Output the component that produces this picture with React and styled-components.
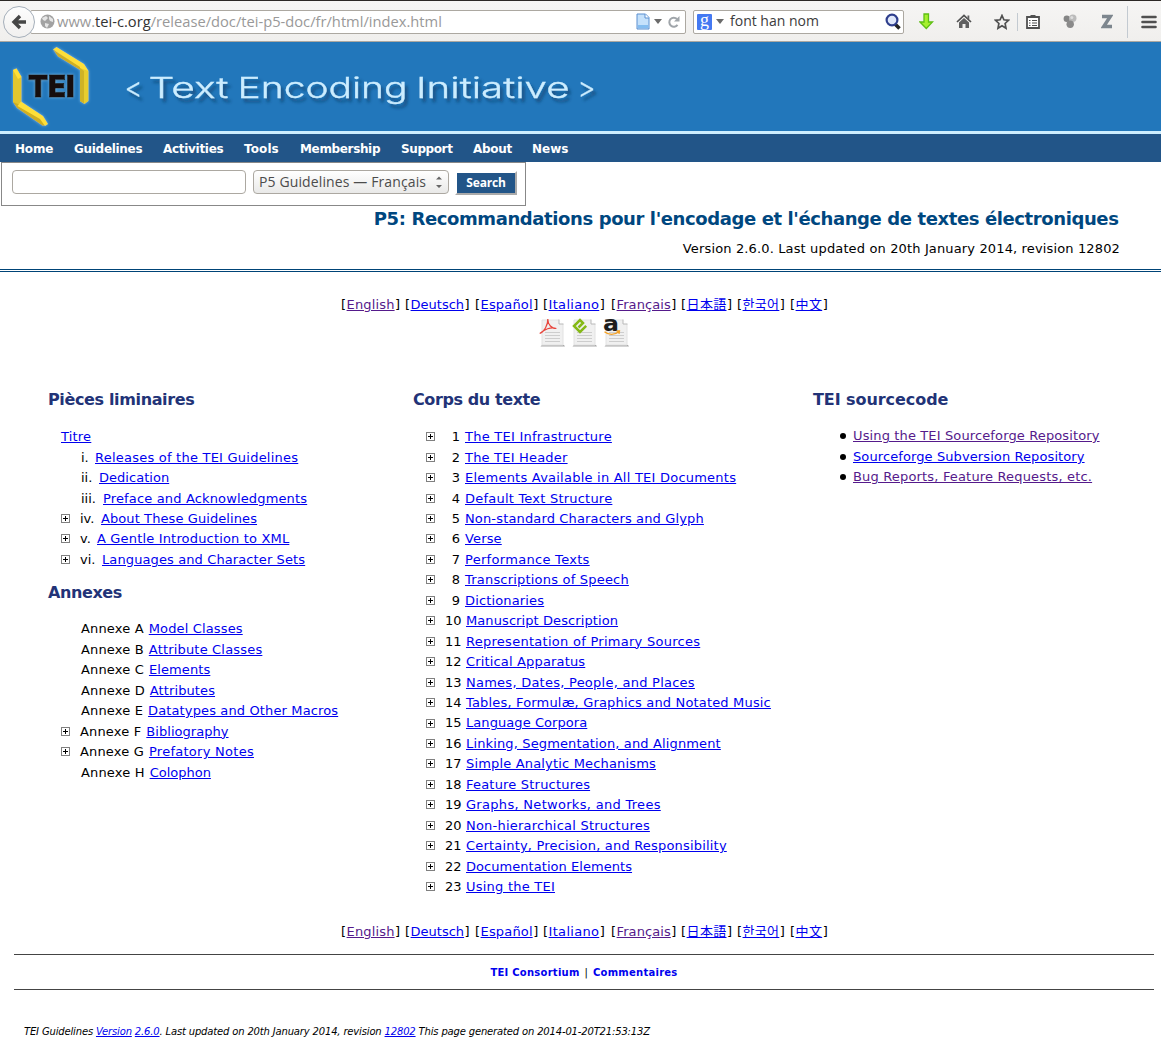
import React from "react";
import styled, { createGlobalStyle } from "styled-components";

const Global = createGlobalStyle`
  * { box-sizing: border-box; }
  body {
    margin: 0;
    background: #fff;
    color: #000;
    font: 13px/20.46px "DejaVu Sans", "Noto Sans CJK JP", "Noto Sans CJK KR", sans-serif;
  }
`;

const Page = styled.div`
  width: 1161px;
  height: 1058px;
  overflow: hidden;
`;

/* Browser toolbar */
const Toolbar = styled.div`
  display: flex;
  align-items: center;
  height: 42px;
  padding-top: 1px;
  border-top: 1px solid #2c2825;
  border-bottom: 1px solid #aca8a1;
  background: linear-gradient(#f6f5f4, #f0efed);
  font-family: "Open Sans", sans-serif;
`;
const BackButton = styled.div`
  flex: none;
  display: flex;
  align-items: center;
  justify-content: center;
  width: 32px;
  height: 32px;
  margin-left: 3px;
  border: 1px solid #a5afba;
  border-radius: 50%;
  background: linear-gradient(#fdfdfd, #f1f0ef);
  z-index: 1;
`;
const Field = styled.div`
  display: flex;
  flex: none;
  align-items: center;
  height: 24px;
  border: 1px solid #aca8a1;
  border-radius: 2px;
  background: #fff;
`;
const UrlField = styled(Field)`
  width: 656px;
  margin-left: -5px;
  padding: 0 5px 0 9px;
`;
const SearchField = styled(Field)`
  width: 211px;
  margin-left: 7px;
  padding: 0 2px 0 3px;
`;
const Url = styled.span`
  flex: 1;
  margin-left: 2px;
  color: #999;
  font-size: 14.7px;
  white-space: nowrap;
  b { color: #333; font-weight: 400; }
`;
const Query = styled.span`
  flex: 1;
  margin-left: 6px;
  color: #3c3c3c;
  font-size: 14px;
  white-space: nowrap;
`;
const GBadge = styled.span`
  display: flex;
  justify-content: center;
  width: 15px;
  height: 16px;
  border-radius: 1px;
  background: #4479f2;
  color: #fff;
  font: 18px/12px "Liberation Serif", serif;
`;
const Caret = styled.span`
  margin: 0 ${(p) => p.$right || 0}px 0 4px;
  border: 4px solid transparent;
  border-top: 5px solid #6b6b6b;
  border-bottom: 0;
`;
const Tool = styled.span`
  display: flex;
  flex: none;
  justify-content: center;
  width: 20px;
  margin-left: ${(p) => p.$gap}px;
`;
const Divider = styled.span`
  flex: none;
  width: 1px;
  height: ${(p) => p.$h}px;
  margin-left: ${(p) => p.$gap}px;
  background: #c3cad1;
`;

/* Site banner */
const Banner = styled.header`
  display: flex;
  height: 92px;
  border-bottom: 3px solid #cdeeff;
  background: #2277bb;
`;
const Nav = styled.nav`
  display: flex;
  align-items: center;
  gap: 21px;
  height: 28px;
  padding: 2px 0 0 15px;
  background: #225588;
  color: #fff;
  font-size: 12px;
  font-weight: 700;
`;
const NavItem = styled.span`
  width: ${(p) => p.$w}px;
  letter-spacing: ${(p) => p.$track || 0}px;
  white-space: nowrap;
`;

/* Search form */
const SearchForm = styled.div`
  display: flex;
  align-items: flex-start;
  width: 525px;
  height: 44px;
  margin-left: 1px;
  padding: 7px 0 0 10px;
  border: 1px solid #888;
`;
const Control = styled.div`
  height: 24px;
  border: 1px solid #aca8a1;
  border-radius: 4px;
`;
const TextBox = styled(Control)`
  width: 234px;
`;
const Picker = styled(Control)`
  display: flex;
  align-items: center;
  justify-content: space-between;
  width: 196px;
  margin-left: 7px;
  padding: 0 5px 2px 5px;
  background: linear-gradient(#fff, #e9e9e8);
  color: #4c4c4c;
  font: 14px "Open Sans", sans-serif;
  letter-spacing: 0.12px;
  white-space: nowrap;
`;
const Submit = styled.div`
  width: 62px;
  height: 24px;
  margin: 1px 0 0 6px;
  border: 2px solid #aaa;
  border-top-color: #fff;
  border-left-color: #fff;
  background: #225588;
  background-clip: padding-box;
  color: #fff;
  font: 700 12px/20px "Open Sans", sans-serif;
  letter-spacing: -0.2px;
  text-align: center;
`;

/* Document heading */
const TitleBlock = styled.div`
  height: 66px;
  padding-right: 41px;
  border-bottom: 3px double #004477;
  text-align: right;
`;
const Title = styled.h1`
  margin: 0;
  padding-right: 1.5px;
  color: #00477f;
  font-size: 18px;
  line-height: 25px;
  letter-spacing: -0.395px;
`;
const Version = styled.div`
  margin-top: 8px;
  letter-spacing: 0.14px;
`;

const Link = styled.a`
  color: ${(p) => (p.$visited ? "#551a8b" : "#0000ee")};
  text-decoration: underline;
  letter-spacing: ${(p) => p.$track || 0}px;
`;

const Languages = styled.div`
  display: flex;
  justify-content: center;
  padding-left: 8px;
  margin-top: ${(p) => p.$top}px;
`;
const LangItem = styled.span`
  flex: none;
  width: ${(p) => p.$w}px;
  white-space: nowrap;
  a { margin: 0 0.5px; }
`;
const Downloads = styled.div`
  display: flex;
  justify-content: center;
  gap: 6px;
  height: 32px;
  margin-top: 2px;
  padding-left: 7px;
  svg { overflow: visible; }
`;

/* Contents */
const Columns = styled.main`
  display: grid;
  grid-template-columns: 365px 400px 1fr;
  height: 520px;
  margin-top: 40px;
  padding-left: 48px;
`;
const Heading = styled.h2`
  margin: ${(p) => p.$top || 0}px 0 0;
  color: #223377;
  font-size: 16px;
  line-height: 21px;
  letter-spacing: ${(p) => p.$track}px;
`;
const List = styled.div`
  margin-top: ${(p) => p.$top}px;
  padding-left: 13px;
  white-space: nowrap;
`;
const Row = styled.div`
  display: flex;
  align-items: center;
  height: ${(p) => p.$h || 20.46}px;
`;
const Toggle = styled.span`
  flex: none;
  display: flex;
  width: ${(p) => (p.$blank ? 20 : 19)}px;
  margin-bottom: 1.4px;
`;
const Marker = styled.span`
  width: ${(p) => p.$w}px;
  margin-right: ${(p) => p.$gap || 5}px;
  letter-spacing: ${(p) => p.$track || 0}px;
  text-align: ${(p) => p.$align || "left"};
`;
const Bullet = styled.span`
  width: 6px;
  height: 6px;
  margin: 0 7px 1px 14px;
  border-radius: 50%;
  background: #000;
`;

/* Footer */
const FooterBar = styled.div`
  display: flex;
  justify-content: center;
  gap: 5px;
  height: 36px;
  margin: 11px 7px 0 14px;
  border-top: 1px solid #444;
  border-bottom: 1px solid #444;
  font-size: 10px;
  line-height: 36px;
`;
const FooterLink = styled.a`
  color: #0000ee;
  font-weight: 700;
  letter-spacing: 0.25px;
`;
const Colophon = styled.div`
  margin: 32px 0 0 24px;
  font-size: 10px;
  font-style: italic;
  letter-spacing: -0.16px;
  white-space: nowrap;
  a { letter-spacing: inherit; }
`;

const Svg = (p) => <svg width={p.w} height={p.h} viewBox={`0 0 ${p.w} ${p.h}`} fill="none">{p.children}</svg>;

const Plus = () => (
  <Svg w={9} h={9}>
    <rect x=".5" y=".5" width="8" height="8" fill="#fff" stroke="#808080" />
    <path d="M2 4.5h5M4.5 2v5" stroke="#000" />
  </Svg>
);

const Sheet = ({ children }) => (
  <Svg w={26} h={32}>
    <path d="M3 28h22l1 1.500H1.500z" fill="#aaa" />
    <path d="M3 3h17l4 4v21H3z" fill="#f0f0f0" stroke="#e2e2e2" />
    <path d="M20 2.500v4.500h4.500" fill="#fff" stroke="#b8b8b8" />
    <path d="M6 15.500h15M6 18.500h15M6 21.500h15M6 24.500h15" stroke="#cdcdcd" />
    {children}
  </Svg>
);

const languages = [
  ["English", 1, 64, 0.15], ["Deutsch", 0, 70, 0], ["Español", 0, 68, 0.15], ["Italiano", 0, 68, 0.3],
  ["Français", 1, 70, 0.08], ["日本語", 0, 56, 0.3], ["한국어", 0, 53, 0.3], ["中文", 0, 38, 0.3],
];
const LanguageBar = ({ top }) => (
  <Languages $top={top}>
    {languages.map(([name, visited, w, track]) => (
      <LangItem key={name} $w={w}>[<Link $visited={visited} $track={track}>{name}</Link>]</LangItem>
    ))}
  </Languages>
);

const front = [
  ["i.", "Releases of the TEI Guidelines", 9, 0.23],
  ["ii.", "Dedication", 13, 0.03],
  ["iii.", "Preface and Acknowledgments", 17, 0.15],
  ["iv.", "About These Guidelines", 16, 0.09, 1],
  ["v.", "A Gentle Introduction to XML", 12, 0.17, 1],
  ["vi.", "Languages and Character Sets", 17, 0.11, 1],
];
const annexes = [
  ["A", "Model Classes", 0.14], ["B", "Attribute Classes", 0.18], ["C", "Elements", 0.1], ["D", "Attributes", 0.1],
  ["E", "Datatypes and Other Macros", 0.13], ["F", "Bibliography", 0.04, 1], ["G", "Prefatory Notes", 0.27, 1], ["H", "Colophon", 0],
];
const chapters = [
  ["The TEI Infrastructure", 0.25], ["The TEI Header", 0.2], ["Elements Available in All TEI Documents", 0.23],
  ["Default Text Structure", 0.22], ["Non-standard Characters and Glyph", 0.15], ["Verse", 0.15],
  ["Performance Texts", 0.3], ["Transcriptions of Speech", 0.2], ["Dictionaries", 0.15],
  ["Manuscript Description", 0.09], ["Representation of Primary Sources", 0.27], ["Critical Apparatus", 0.16],
  ["Names, Dates, People, and Places", 0.25], ["Tables, Formulæ, Graphics and Notated Music", 0.17], ["Language Corpora", 0.07],
  ["Linking, Segmentation, and Alignment", 0.14], ["Simple Analytic Mechanisms", 0.17], ["Feature Structures", 0.2],
  ["Graphs, Networks, and Trees", 0.3], ["Non-hierarchical Structures", 0.22], ["Certainty, Precision, and Responsibility", 0.19],
  ["Documentation Elements", 0.05], ["Using the TEI", 0.23],
];
const sources = [
  ["Using the TEI Sourceforge Repository", 1, 0.13],
  ["Sourceforge Subversion Repository", 0, 0.1],
  ["Bug Reports, Feature Requests, etc.", 1, 0.17],
];
const nav = [
  ["Home", 38, -0.2], ["Guidelines", 68, -0.3], ["Activities", 60, -0.3], ["Tools", 35, 0.1],
  ["Membership", 80, -0.35], ["Support", 51, -0.4], ["About", 38, -0.3], ["News", 36, 0],
];
const bannerWords = [["<", 124.500, 18], ["Text", 148.500, 80], ["Encoding", 237.500, 170], ["Initiative", 416, 153.500], [">", 577.500, 18]];

export default function App() {
  return (
    <Page>
      <Global />
      <Toolbar>
        <BackButton>
          <Svg w={16} h={16}><path d="M9 2L3 8l6 6M3.500 8H15" stroke="#464646" strokeWidth="3.400" /></Svg>
        </BackButton>
        <UrlField>
          <Svg w={15} h={15}>
            <circle cx="7.500" cy="7.500" r="7" fill="#a2a2a2" />
            <path d="M2 4l4-2 2 2-3 3-2-1zM9 2l4 3v3l-3-1-1-2zM5 9l4 1-2 4-2-2z" fill="#e5e5e5" />
          </Svg>
          <Url>www.<b>tei-c.org</b>/release/doc/tei-p5-doc/fr/html/index.html</Url>
          <Svg w={14} h={17}>
            <path d="M1 1h8.500L13 4.500V16H1z" fill="#c5e1fb" stroke="#5a8fd0" />
            <path d="M9 1v4h4" fill="#fff" stroke="#5a8fd0" />
            <path d="M2 12h10v3H2z" fill="#84bdf0" />
          </Svg>
          <Caret $right={6} />
          <Svg w={12} h={14}>
            <path d="M9.500 9.800A4.500 4.500 0 1 1 9 4" stroke="#a0a5aa" strokeWidth="2" />
            <path d="M11.500 1v5.500H6z" fill="#a0a5aa" />
          </Svg>
        </UrlField>
        <SearchField>
          <GBadge>g</GBadge>
          <Caret />
          <Query>font han nom</Query>
          <Svg w={16} h={17}>
            <path d="M10 11l4.500 4.500" stroke="#222" strokeWidth="3.500" />
            <circle cx="7" cy="7" r="5.400" fill="#dfe7fa" stroke="#2f3f8d" strokeWidth="2.200" />
          </Svg>
        </SearchField>
        <Tool $gap={12}>
          <Svg w={15} h={17}><path d="M5 1h4.500v8H13.500l-6.200 6.500L1 9h4z" fill="#a6f02f" stroke="#5fbf15" strokeWidth="1.300" /></Svg>
        </Tool>
        <Tool $gap={18}>
          <Svg w={16} h={15}>
            <path d="M1 8l7-6.500L15 8" stroke="#505050" strokeWidth="1.700" />
            <path d="M3 8.500l5-4.500 5 4.500V14H9.500v-4h-3v4H3zM11.500 1.500h1.800V5h-1.800z" fill="#606060" />
          </Svg>
        </Tool>
        <Tool $gap={18}>
          <Svg w={16} h={16}><path d="M8 1.500l1.900 4.300 4.600.5-3.400 3.200.9 4.700L8 11.800l-4 2.400.9-4.700L1.500 6.300l4.600-.5z" stroke="#505050" strokeWidth="1.700" /></Svg>
        </Tool>
        <Divider $h={18} $gap={5} />
        <Tool $gap={5}>
          <Svg w={14} h={15}>
            <path d="M1 3h12v11H1z" fill="#fff" stroke="#505050" strokeWidth="1.800" />
            <path d="M4.500 1h5v3h-5z" fill="#505050" />
            <path d="M3 6.500h1.500M6 6.500h5M3 9h1.500M6 9h5M3 11.500h1.500M6 11.500h5" stroke="#505050" strokeWidth="1.100" />
          </Svg>
        </Tool>
        <Tool $gap={17}>
          <Svg w={14} h={15}>
            <circle cx="3.800" cy="4.800" r="3.200" fill="#858585" />
            <circle cx="9.800" cy="4.200" r="3.700" fill="#bbb" />
            <circle cx="7.200" cy="10.200" r="3.700" fill="#8a8a8a" />
            <circle cx="8.800" cy="3.500" r="1.500" fill="#ddd" />
          </Svg>
        </Tool>
        <Tool $gap={17}>
          <Svg w={12} h={15}><path d="M1 2.500H9.300L2.700 12.500H11" stroke="#7d868e" strokeWidth="3.400" /></Svg>
        </Tool>
        <Divider $h={32} $gap={10} />
        <Tool $gap={11}>
          <Svg w={16} h={14}><path d="M1.500 2h13M1.500 7h13M1.500 12h13" stroke="#505050" strokeWidth="2.600" strokeLinecap="round" /></Svg>
        </Tool>
      </Toolbar>

      <Banner>
        <svg width="620" height="89" viewBox="0 0 620 89">
          <defs>
            <filter id="shadow" x="-10%" y="-30%" width="130%" height="190%">
              <feDropShadow dx="3" dy="4" stdDeviation="1.500" floodColor="#0b3c68" floodOpacity=".65" />
            </filter>
            <filter id="glow" x="-30%" y="-30%" width="160%" height="160%">
              <feDropShadow dx="0" dy="0" stdDeviation="1.700" floodColor="#a8ddff" floodOpacity=".6" />
            </filter>
          </defs>
          <g filter="url(#glow)">
            <path d="M53 7.500l3.500-2.500L84 22l4.500 7-6 2-3-5z" fill="#ffdf38" />
            <path d="M53 7.500L80 25v3L58 14.500z" fill="#cfaf22" />
            <path d="M80 26l8.500 3v30l-4 3-4.500-3z" fill="#e8cd2f" />
            <path d="M80 26l4 3v32.500L80 59z" fill="#cfb327" />
            <path d="M13 28l3.500-1.500 5 8.500v25.500l-4 5L13 60z" fill="#e3c62d" />
            <path d="M13 28l3.500-1.500L21.500 35 18 37z" fill="#ffdf38" />
            <path d="M13 60l4 6 26 18 2-1-7-12-20-9z" fill="#cfaf22" />
            <path d="M17.500 64l3.500-4.500L43 74l5 8-3 2-5-7z" fill="#ffdf38" />
          </g>
          <text x="28" y="55" textLength="46.500" lengthAdjust="spacingAndGlyphs" fontFamily="Inter" fontWeight="900" fontSize="30" fill="#14110c" stroke="#14110c" strokeWidth=".8" filter="url(#glow)">TEI</text>
          <g fontFamily="Inter" fontWeight="300" fontSize="28" fill="#ccedff" stroke="#ccedff" strokeWidth=".3" filter="url(#shadow)">
            {bannerWords.map(([word, x, w]) => (
              <text key={word} x={x} y="56" textLength={w} lengthAdjust="spacingAndGlyphs">{word}</text>
            ))}
          </g>
        </svg>
      </Banner>
      <Nav>{nav.map(([t, w, track]) => <NavItem key={t} $w={w} $track={track}>{t}</NavItem>)}</Nav>

      <SearchForm>
        <TextBox />
        <Picker>
          P5 Guidelines — Français
          <Svg w={8} h={14}><path d="M1 5.500l3-3 3 3zM1 11l3 3 3-3z" fill="#666" /></Svg>
        </Picker>
        <Submit>Search</Submit>
      </SearchForm>

      <TitleBlock>
        <Title>P5: Recommandations pour l'encodage et l'échange de textes électroniques</Title>
        <Version>Version 2.6.0. Last updated on 20th January 2014, revision 12802</Version>
      </TitleBlock>

      <LanguageBar top={23} />
      <Downloads>
        <Sheet><path d="M.8 16.500C5 15 9 8 8.800 2c0 6 4 9.500 8.500 9.500C12 9.500 5 12.500.8 16.500z" stroke="#e8453c" strokeWidth="1.200" /></Sheet>
        <Sheet><path d="M7.500 10.500L12 6 9 3 3 9l6 6 6.200-6.200" stroke="#85b916" strokeWidth="2.500" /></Sheet>
        <Sheet>
          <text x="0" y="14" fontFamily="DejaVu Sans" fontWeight="700" fontSize="22" textLength="16" lengthAdjust="spacingAndGlyphs" fill="#1c1c1c">a</text>
          <path d="M1.500 14.800c4 3.500 10 3.500 14.500 0M13.500 14h3l-.5 3" stroke="#f4a125" strokeWidth="1.300" />
        </Sheet>
      </Downloads>

      <Columns>
        <section>
          <Heading $track={-0.36}>Pièces liminaires</Heading>
          <List $top={16.7}>
            <Row><Link $track={0.2}>Titre</Link></Row>
            {front.map(([n, t, w, track, plus]) => (
              <Row key={t}><Toggle $blank={!plus}>{plus && <Plus />}</Toggle><Marker $w={w}>{n}</Marker><Link $track={track}>{t}</Link></Row>
            ))}
          </List>
          <Heading $top={11.3} $track={-0.4}>Annexes</Heading>
          <List $top={16.6}>
            {annexes.map(([n, t, track, plus]) => (
              <Row key={t} $h={20.54}><Toggle $blank={!plus}>{plus && <Plus />}</Toggle><Marker $track={0.16} $gap={5}>Annexe {n}</Marker><Link $track={track}>{t}</Link></Row>
            ))}
          </List>
        </section>
        <section>
          <Heading $track={-0.4}>Corps du texte</Heading>
          <List $top={16.7}>
            {chapters.map(([t, track], i) => (
              <Row key={t}><Toggle><Plus /></Toggle><Marker $w={i < 9 ? 15 : 16} $align="right">{i + 1}</Marker><Link $track={track}>{t}</Link></Row>
            ))}
          </List>
        </section>
        <section>
          <Heading $track={-0.07}>TEI sourcecode</Heading>
          <List $top={16}>
            {sources.map(([t, v, track]) => <Row key={t}><Bullet /><Link $visited={v} $track={track}>{t}</Link></Row>)}
          </List>
        </section>
      </Columns>

      <LanguageBar top={13} />
      <FooterBar><FooterLink>TEI Consortium</FooterLink><span>|</span><FooterLink>Commentaires</FooterLink></FooterBar>
      <Colophon>
        TEI Guidelines <Link>Version</Link> <Link>2.6.0</Link>. Last updated on 20th January 2014, revision <Link>12802</Link> This page generated on 2014-01-20T21:53:13Z
      </Colophon>
    </Page>
  );
}
